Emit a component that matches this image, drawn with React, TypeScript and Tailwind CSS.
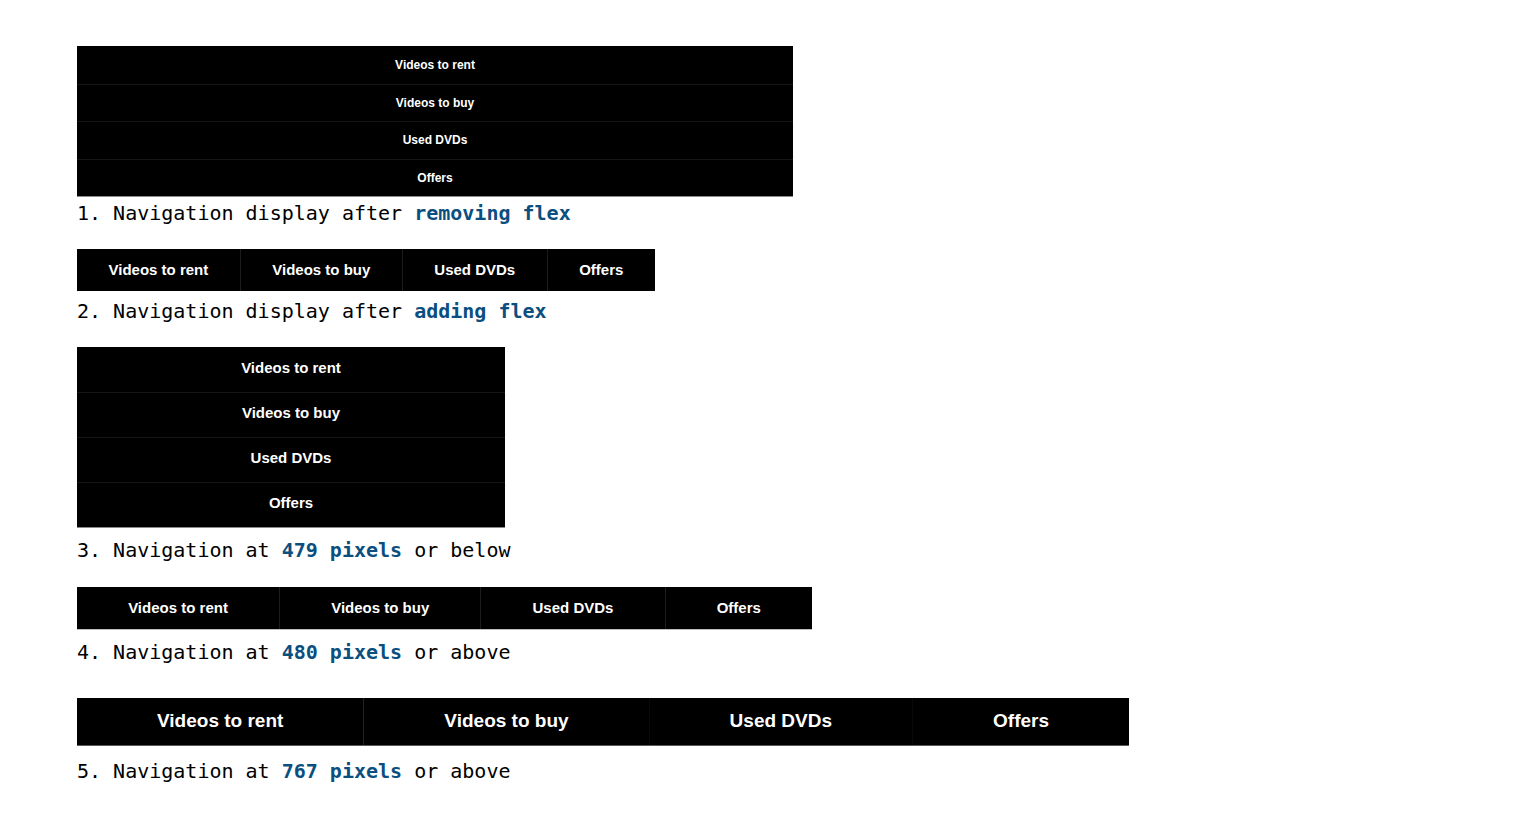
import React from "react";

const items = ["Videos to rent", "Videos to buy", "Used DVDs", "Offers"];
const sans = { fontFamily: '"Liberation Sans", Arial, sans-serif' };

function Caption({ pre, hl, post, className }: { pre: string; hl: string; post?: string; className: string }) {
  return (
    <p
      className={`text-[20px] leading-[24px] text-black whitespace-pre ${className}`}
      style={{ fontFamily: '"DejaVu Sans Mono", monospace' }}
    >
      {pre}
      <span className="font-bold text-[#0b4f80]">{hl}</span>
      {post}
    </p>
  );
}

export default function App() {
  return (
    <div className="min-h-[836px] w-[1516px] bg-white pl-[77px] pt-[46px]">
      {/* 1 */}
      <div className="flex w-[716px] flex-col border-b border-[#8a8a8a] bg-black" style={sans}>
        {items.map((t, i) => (
          <div
            key={t}
            className={`flex h-[37.5px] items-center justify-center whitespace-nowrap text-[12px] font-bold text-white ${i > 0 ? "border-t border-[#151515]" : ""}`}
          >
            {t}
          </div>
        ))}
      </div>
      <Caption className="mt-[4px]" pre="1. Navigation display after " hl="removing flex" />

      {/* 2 */}
      <div className="mt-[24px] flex h-[42px] w-fit bg-black" style={sans}>
        {items.map((t, i) => (
          <div
            key={t}
            className={`flex shrink-0 items-center justify-center whitespace-nowrap px-[31.5px] text-[15px] font-bold text-white ${i > 0 ? "border-l border-[#1c1c1c]" : ""}`}
          >
            {t}
          </div>
        ))}
      </div>
      <Caption className="mt-[8px]" pre="2. Navigation display after " hl="adding flex" />

      {/* 3 */}
      <div className="mt-[24px] flex w-[428px] flex-col border-b border-[#8a8a8a] bg-black" style={sans}>
        {items.map((t, i) => (
          <div
            key={t}
            className={`flex h-[45px] items-center justify-center whitespace-nowrap pb-[3px] text-[15px] font-bold text-white ${i > 0 ? "border-t border-[#151515]" : ""}`}
          >
            {t}
          </div>
        ))}
      </div>
      <Caption className="mt-[10px]" pre="3. Navigation at " hl="479 pixels" post=" or below" />

      {/* 4 */}
      <div className="mt-[25px] flex h-[43px] w-[735px] border-b border-[#bdbdbd] bg-black" style={sans}>
        {items.map((t, i) => (
          <div
            key={t}
            className={`flex grow items-center justify-center whitespace-nowrap px-8 text-[15px] font-bold text-white ${i > 0 ? "border-l border-[#1c1c1c]" : ""}`}
          >
            {t}
          </div>
        ))}
      </div>
      <Caption className="mt-[10px]" pre="4. Navigation at " hl="480 pixels" post=" or above" />

      {/* 5 */}
      <div className="mt-[34px] flex h-[48px] w-[1052px] border-b border-[#5a5a5a] bg-black" style={sans}>
        {items.map((t, i) => (
          <div
            key={t}
            className={`flex grow items-center justify-center whitespace-nowrap px-8 text-[19px] font-bold text-white ${i === 1 ? "border-l border-[#222222]" : i > 1 ? "border-l border-[#080808]" : ""}`}
          >
            {t}
          </div>
        ))}
      </div>
      <Caption className="mt-[13px]" pre="5. Navigation at " hl="767 pixels" post=" or above" />
    </div>
  );
}
